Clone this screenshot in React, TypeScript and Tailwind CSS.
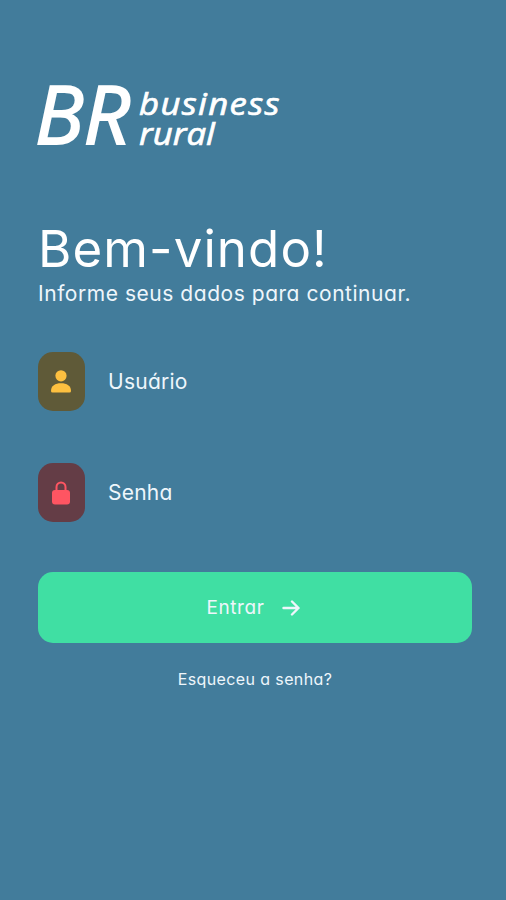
function PersonIcon() {
  return (
    <svg viewBox="0 0 20 23" className="mr-px h-[23px] w-5 text-[#fdc040]" aria-hidden="true">
      <circle cx="10" cy="5.8" r="5.6" fill="currentColor" />
      <path
        d="M0 21C0 15.8 4.2 13.3 10 13.3S20 15.8 20 21Q20 22.5 18.5 22.5H1.5Q0 22.5 0 21Z"
        fill="currentColor"
      />
    </svg>
  );
}

function LockIcon() {
  return (
    <svg viewBox="0 0 18 24" className="mr-[2px] h-6 w-[18px] text-[#ff5562]" aria-hidden="true">
      <path
        d="M4.5 11V6a4.5 4.5 0 0 1 9 0V11"
        fill="none"
        stroke="currentColor"
        strokeWidth="2"
      />
      <rect y="9" width="18" height="14.6" rx="3" fill="currentColor" />
    </svg>
  );
}

function ArrowIcon() {
  return (
    <svg
      viewBox="0 0 18 16"
      className="h-4 w-[18px]"
      fill="none"
      stroke="currentColor"
      strokeWidth="2.4"
      strokeLinecap="round"
      strokeLinejoin="round"
      aria-hidden="true"
    >
      <path d="M1.5 8H16.5M10 1.5L16.5 8L10 14.5" />
    </svg>
  );
}

export default function App() {
  return (
    <main className="min-h-screen bg-[#427c9b] px-[38px] pr-[34px] pt-[73px] font-['Inter','Open_Sans',sans-serif] text-[#eef6fb] [font-feature-settings:'cv11']">
      <header className="flex h-[79px] font-['Open_Sans','Noto_Sans',sans-serif] text-white italic">
        <span className="-ml-[3px] w-[104px] text-[81px] leading-[79px] [-webkit-text-stroke:2px_white]">
          BR
        </span>
        <div className="flex origin-left scale-x-[1.12] flex-col pt-[15px] text-[31px] leading-[30px] [-webkit-text-stroke:0.7px_white]">
          <span className="tracking-[1.2px]">business</span>
          <span>rural</span>
        </div>
      </header>

      <h1 className="mt-[67px] text-[51px] leading-[60px] tracking-[1.1px] text-white">Bem-vindo!</h1>
      <p className="text-[21px] leading-[30px] tracking-[0.54px]">Informe seus dados para continuar.</p>

      <form className="mt-[43px]">
        <label className="flex h-[59px] items-center gap-[23px]">
          <span className="flex h-[59px] w-[47px] items-center justify-center rounded-[15px] bg-[#5f5a38]">
            <PersonIcon />
          </span>
          <span className="text-[21px] tracking-[0.25px]">Usuário</span>
        </label>
        <label className="mt-[52px] flex h-[59px] items-center gap-[23px]">
          <span className="flex h-[59px] w-[47px] items-center justify-center rounded-[15px] bg-[#643d46]">
            <LockIcon />
          </span>
          <span className="text-[21px] tracking-[0.25px]">Senha</span>
        </label>
        <button
          type="button"
          className="mt-[50px] flex h-[71px] w-full items-center justify-center gap-[17px] rounded-[15px] bg-[#40dfa3] pr-[4px] text-[19px] tracking-[0.6px]"
        >
          <span className="pt-px">Entrar</span>
          <ArrowIcon />
        </button>
      </form>
      <p className="mt-[24px] text-center text-[16px] tracking-[0.38px]">Esqueceu a senha?</p>
    </main>
  );
}
